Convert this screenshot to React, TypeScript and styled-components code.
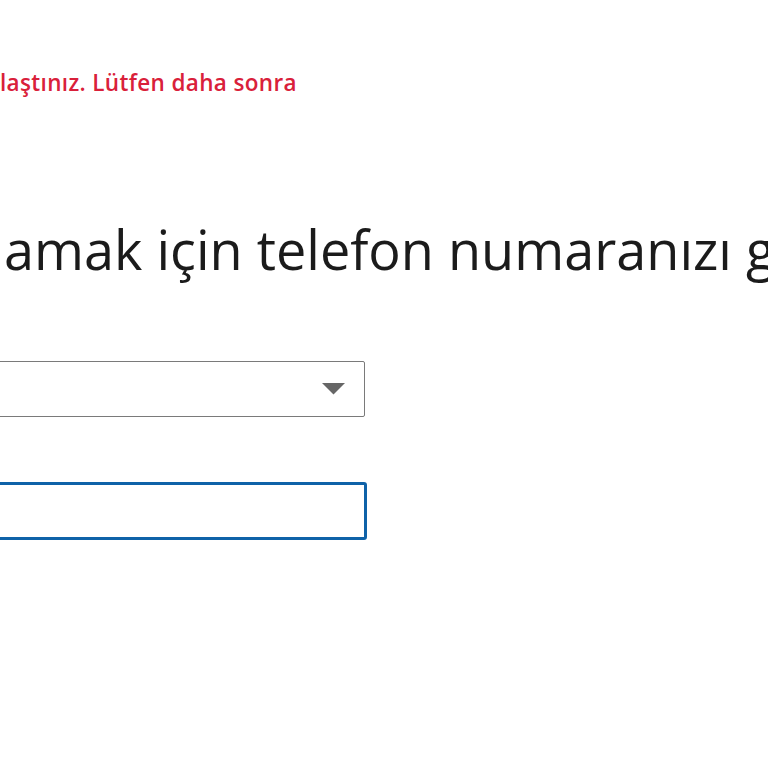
import React from "react";
import styled, { createGlobalStyle } from "styled-components";

const Global = createGlobalStyle`
  html, body {
    margin: 0;
    padding: 0;
    background: #ffffff;
    overflow: hidden;
  }
  body {
    font-family: "Open Sans", "Noto Sans", "DejaVu Sans", sans-serif;
    color: #1b1b1b;
  }
`;

const Page = styled.main`
  width: 768px;
  height: 768px;
  overflow: hidden;
  padding-top: 69px;
  box-sizing: border-box;
`;

const Column = styled.div`
  display: flex;
  flex-direction: column;
  margin-left: -40px;
  width: 405px;
`;

const ErrorText = styled.div`
  margin-left: 40px;
  font-size: 22.5px;
  font-weight: 600;
  letter-spacing: 0.35px;
  line-height: 28.6px;
  color: #d9203a;
  white-space: nowrap;
`;

const Heading = styled.h1`
  margin: 119px 0 0 44px;
  font-size: 54px;
  line-height: 64.8px;
  font-weight: 400;
  color: #1b1b1b;
  white-space: nowrap;
`;

const SelectBox = styled.div`
  margin-top: 80px;
  height: 56px;
  box-sizing: border-box;
  border: 1px solid #7a7a7a;
  border-radius: 2px;
  display: flex;
  align-items: center;
  justify-content: flex-end;
  padding-right: 19px;
`;

const Arrow = styled.svg`
  width: 23px;
  height: 12px;
  display: block;
`;

const PhoneInput = styled.input`
  margin-top: 65px;
  width: 407px;
  height: 58px;
  box-sizing: border-box;
  border: 3px solid #0f62a8;
  border-radius: 3px;
  outline: none;
  font-family: inherit;
  font-size: 22px;
  background: #ffffff;
`;

export default function App() {
  return (
    <>
      <Global />
      <Page>
        <Column>
          <ErrorText>laştınız. Lütfen daha sonra</ErrorText>
          <Heading>amak için telefon numaranızı girin</Heading>
          <SelectBox>
            <Arrow viewBox="0 0 23 12">
              <path d="M0 0 L23 0 L11.5 11.5 Z" fill="#666666" />
            </Arrow>
          </SelectBox>
          <PhoneInput type="tel" aria-label="Telefon numarası" />
        </Column>
      </Page>
    </>
  );
}
